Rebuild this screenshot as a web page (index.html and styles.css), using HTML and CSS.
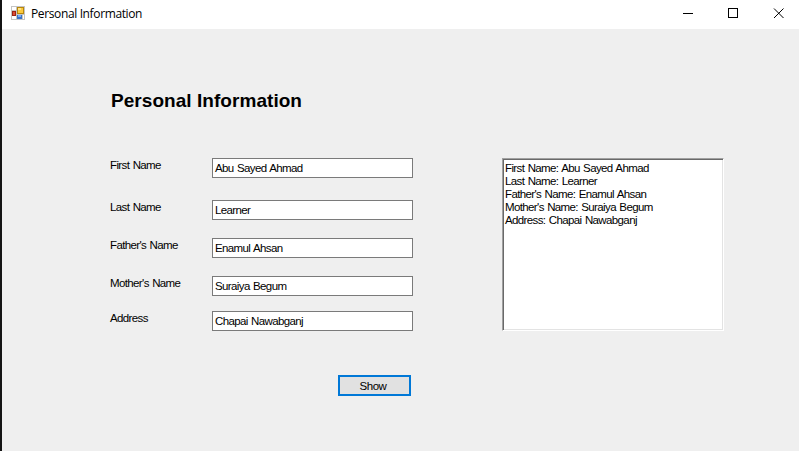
FILE: index.html
```html
<!DOCTYPE html>
<html lang="en">
<head>
<meta charset="utf-8">
<title>Personal Information</title>
<link rel="stylesheet" href="styles.css">
</head>
<body>
<div class="window">
  <header class="titlebar">
    <svg class="app-icon" width="14" height="14" viewBox="0 0 14 14" shape-rendering="crispEdges">
      <path fill="#c4c4c4" d="M0 0h14v14H0z"/>
      <path fill="#fff" d="M1 1h4v3H1zM1 10h4v3H1zM12 9h1v4h-1z"/>
      <path fill="#b8860b" d="M6 1h7v7H6z"/>
      <path fill="#fbc93d" d="M7 2h5v5H7z"/>
      <path fill="#ffe48a" d="M7 2h3v2H7z"/>
      <path fill="#9c2413" d="M1 5h4v5H1z"/>
      <path fill="#dc4b35" d="M2 6h2v3H2z"/>
      <path fill="#3972c8" d="M6 9h5v4H6z"/>
      <path fill="#78aaf0" d="M7 9h3v2H7z"/>
    </svg>
    <span class="caption">Personal Information</span>
    <svg class="controls" width="104" height="12" viewBox="0 0 104 12" fill="none" stroke="#000">
      <path d="M0 5.5h10M45.500 .5h9v9h-9z" shape-rendering="crispEdges"/>
      <path d="M91 .5l9.500 9.500M100.500 .5L91 10"/>
    </svg>
  </header>
  <main class="form">
    <h1 class="heading">Personal Information</h1>
    <div class="columns">
      <div class="fields">
        <span class="label">First Name</span><span class="input">Abu Sayed Ahmad</span>
        <span class="label">Last Name</span><span class="input">Learner</span>
        <span class="label">Father's Name</span><span class="input">Enamul Ahsan</span>
        <span class="label">Mother's Name</span><span class="input">Suraiya Begum</span>
        <span class="label">Address</span><span class="input">Chapai Nawabganj</span>
      </div>
      <div class="listbox">
        <div>First Name: Abu Sayed Ahmad</div>
        <div>Last Name: Learner</div>
        <div>Father's Name: Enamul Ahsan</div>
        <div>Mother's Name: Suraiya Begum</div>
        <div>Address: Chapai Nawabganj</div>
      </div>
    </div>
    <button class="show">Show</button>
  </main>
</div>
</body>
</html>
```
FILE: styles.css
```css
* { box-sizing: border-box; }
body { margin: 0; overflow: hidden; font: 11.5px/13px "Liberation Sans", Arial, sans-serif; letter-spacing: -0.62px; word-spacing: 0.8px; color: #000; }
.window { width: 799px; height: 451px; border-left: 2px solid #141414; background: #efefef; }
.titlebar { display: flex; height: 29px; padding: 6px 0 0 9px; background: #fff; }
.app-icon { flex: none; }
.caption { margin-left: 6px; font: 12px/16px "Open Sans", "Noto Sans", sans-serif; letter-spacing: -0.37px; word-spacing: 0; white-space: nowrap; width: 652px; }
.controls { flex: none; margin-top: 2px; }
.form { padding: 60px 0 0 108px; }
.heading { margin: 0 0 0 1px; height: 69px; font-size: 19px; line-height: 23px; font-weight: 700; letter-spacing: 0.05px; word-spacing: 0; }
.columns { display: flex; gap: 89px; }
.fields { display: grid; grid-template-columns: 102px 201px; grid-template-rows: 42px 38px 38px 35px 20px; height: 173px; }
.label { padding-top: 1px; white-space: nowrap; }
.input { height: 20px; padding: 3px 0 0 2px; border: 1px solid #7a7a7a; background: #fff; white-space: nowrap; }
.listbox { width: 222px; height: 173px; padding: 3px 0 0 1px; border: 1px solid; border-color: #a0a0a0 #fff #fff #a0a0a0; background: #fff; box-shadow: inset 1px 1px #696969, inset -1px -1px #e3e3e3; white-space: nowrap; }
.listbox div { padding-left: 1px; }
.show { display: block; width: 73px; height: 21px; margin: 44px 0 0 228px; padding: 1px 3px 0 0; border: 2px solid #0078d7; background: #e1e1e1; font: inherit; letter-spacing: -0.5px; color: #000; }
```
